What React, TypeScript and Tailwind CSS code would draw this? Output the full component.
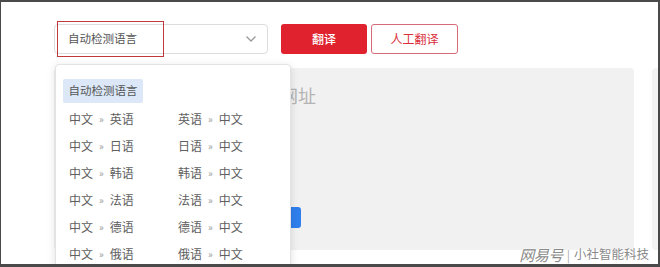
import React from "react";

const pairs: [string, string][] = [
  ["中文", "英语"],
  ["中文", "日语"],
  ["中文", "韩语"],
  ["中文", "法语"],
  ["中文", "德语"],
  ["中文", "俄语"],
];

function Pair({ a, b }: { a: string; b: string }) {
  return (
    <div className="flex w-[109px] items-center text-[12px] text-[#606060]">
      <span>{a}</span>
      <span className="mx-[6px] text-[10px] text-[#9a9a9a]">»</span>
      <span>{b}</span>
    </div>
  );
}

export default function App() {
  return (
    <div
      className="relative h-[267px] w-[660px] overflow-hidden border-b-[3px] border-l border-r-2 border-t-2 border-[#4a4a4a] bg-white"
      style={{ fontFamily: '"Noto Sans CJK SC", "Noto Sans", sans-serif' }}
    >
      {/* top row */}
      <div className="ml-[53px] flex pt-[22px]">
        <div className="relative flex h-[30px] w-[214px] items-center justify-between rounded-[4px] border border-[#dcdcdc] pl-[13px] pr-[10px]">
          <span className="text-[11.5px] text-[#555]">自动检测语言</span>
          <svg width="12" height="8" viewBox="0 0 12 8" fill="none">
            <path d="M1.5 1.5 L6 6 L10.5 1.5" stroke="#999" strokeWidth="1.3" />
          </svg>
          <div className="absolute left-[2px] top-[-4px] h-[36px] w-[107px] border border-[#c0393b]" />
        </div>
        <button className="ml-[13px] flex h-[30px] w-[86px] items-center justify-center rounded-[3px] bg-[#e0222e] text-[12px] font-medium text-white">
          翻译
        </button>
        <button className="ml-[4px] flex h-[30px] w-[87px] items-center justify-center rounded-[3px] border border-[#d66a76] text-[12px] text-[#d9303c]">
          人工翻译
        </button>
      </div>

      {/* content row */}
      <div className="ml-[53px] mt-[14px] flex gap-[18px]">
        <div className="flex h-[182px] w-[580px] shrink-0 flex-col rounded-[4px] bg-[#f1f1f1] pb-[22px] pl-[172px] pt-[14px]">
          <span className="text-[18px] text-[#b4b4b4]">请输入网址</span>
          <button className="mt-auto h-[21px] w-[75px] rounded-[3px] bg-[#2f7fec]" />
        </div>
        <div className="h-[182px] w-[200px] shrink-0 rounded-[4px] bg-[#f4f4f4]" />
      </div>

      {/* dropdown */}
      <div className="absolute left-[54px] top-[62px] h-[230px] w-[236px] rounded-[4px] border border-[#e3e3e3] bg-white pl-[7px] pt-[14px] shadow-[0_2px_8px_rgba(0,0,0,0.12)]">
        <div className="flex h-[24px] w-[80px] items-center justify-center rounded-[2px] bg-[#dce8f8] text-[11.5px] text-[#555]">
          自动检测语言
        </div>
        <div className="mt-[2px] pl-[6px]">
          {pairs.map(([a, b], i) => (
            <div key={i} className="flex h-[27px] items-center">
              <Pair a={a} b={b} />
              <Pair a={b} b={a} />
            </div>
          ))}
        </div>
      </div>

      {/* watermark */}
      <div
        className="absolute bottom-[-2px] right-[9px] flex items-center text-[#8a8a8a]"
        style={{ textShadow: "0 0 2px #fff, 0 0 2px #fff" }}
      >
        <span className="text-[15px] italic tracking-[-0.5px]">网易号</span>
        <span className="mx-[4px] text-[12px] text-[#aaa]">|</span>
        <span className="text-[12.5px]">小社智能科技</span>
      </div>
    </div>
  );
}
